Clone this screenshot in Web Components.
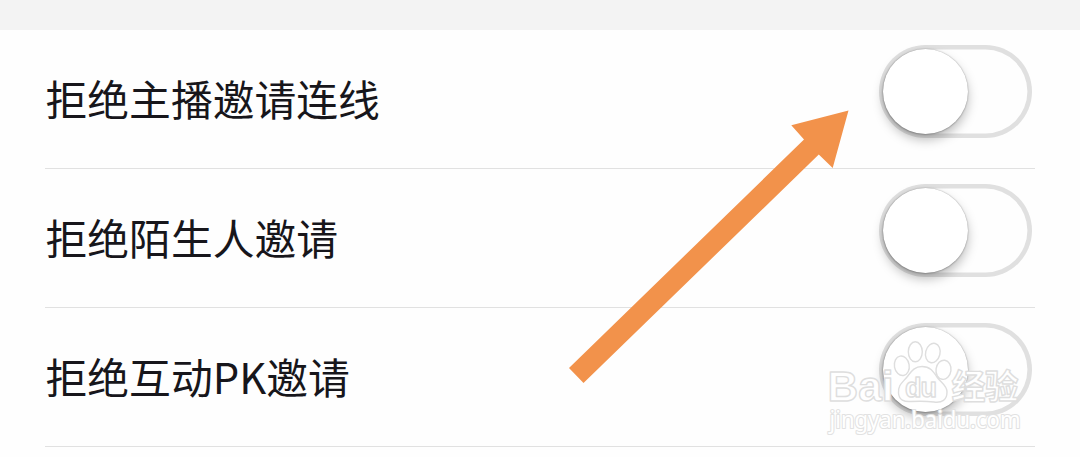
<!DOCTYPE html>
<html lang="zh-CN">
<head>
<meta charset="UTF-8">
<title>邀请设置</title>
<style>
  body {
    margin: 0;
    background: #fefefe;
    color: #17161b;
    font-family: 'Noto Sans CJK SC', sans-serif;
    overflow: hidden;
  }
</style>
</head>
<body>
<settings-page>
  <setting-row>拒绝主播邀请连线</setting-row>
  <setting-row>拒绝陌生人邀请</setting-row>
  <setting-row>拒绝互动PK邀请</setting-row>
  <pointer-arrow slot="overlay"></pointer-arrow>
  <water-mark slot="overlay"></water-mark>
</settings-page>

<script>
//page: grey strip on top, then the list of rows
const pageTemplate = document.createElement('template');
pageTemplate.innerHTML = `
<style>
  :host {
    display: flex;
    flex-direction: column;
    position: relative;
    height: 457px;
    overflow: hidden;
  }
  .strip {
    flex: none;
    height: 30px;
    background: #f3f3f3;
  }
  .list {
    display: flex;
    flex-direction: column;
    padding: 0 45px;
  }
</style>
<div class="strip"></div>
<div class="list"><slot></slot></div>
<slot name="overlay"></slot>`;

class SettingsPage extends HTMLElement {
  constructor() {
    super();
    this.attachShadow({ mode: 'open' });
    this.shadowRoot.appendChild(pageTemplate.content.cloneNode(true));
  }
}

//on/off switch
const switchTemplate = document.createElement('template');
switchTemplate.innerHTML = `
<style>
  :host {
    display: block;
    flex: none;
    box-sizing: border-box;
    width: 153px;
    height: 93px;
    padding: 4px;
    border-radius: 47px;
    box-shadow: inset 0 0 0 4.6px #e0e0e0;
    cursor: pointer;
  }
  .knob {
    width: 85px;
    height: 85px;
    border-radius: 50%;
    background: #fff;
    box-shadow: 0 0 1.5px rgba(0, 0, 0, .36), -.5px 1px 2px rgba(0, 0, 0, .16), 0 6px 11px rgba(0, 0, 0, .26);
  }
  :host([checked]) { background: #4cd964; box-shadow: none; }
  :host([checked]) .knob { margin-left: 60px; }
</style>
<div class="knob"></div>`;

class ToggleSwitch extends HTMLElement {
  constructor() {
    super();
    this.attachShadow({ mode: 'open' });
    this.shadowRoot.appendChild(switchTemplate.content.cloneNode(true));
    this.addEventListener('click', () => this.toggleAttribute('checked'));
  }
}

//label on the left, switch on the right
const rowTemplate = document.createElement('template');
rowTemplate.innerHTML = `
<style>
  :host {
    display: flex;
    justify-content: space-between;
    align-items: flex-start;
    box-sizing: border-box;
    height: 139px;
    padding: 15px 3px 0 0;
    border-bottom: 1px solid #e1e1e1;
  }
  .label {
    padding: 23px 0 0 .5px;
    font-size: 41.8px;
    line-height: 60px;
    white-space: nowrap;
  }
</style>
<div class="label"><slot></slot></div>
<toggle-switch></toggle-switch>`;

class SettingRow extends HTMLElement {
  constructor() {
    super();
    this.attachShadow({ mode: 'open' });
    this.shadowRoot.appendChild(rowTemplate.content.cloneNode(true));
  }
}

//orange arrow over the list
const arrowTemplate = document.createElement('template');
arrowTemplate.innerHTML = `
<style>
  :host {
    position: absolute;
    left: 569px;
    top: 110px;
    pointer-events: none;
  }
  svg { display: block; }
</style>
<svg width="280" height="274" viewBox="0 0 280 274">
  <path d="M279.5 .5 L222.3 15.3 L235 29.5 L0 258 L14.5 273 L249.8 44.5 L263.7 58 Z" fill="#f2924b"/>
</svg>`;

class PointerArrow extends HTMLElement {
  constructor() {
    super();
    this.attachShadow({ mode: 'open' });
    this.shadowRoot.appendChild(arrowTemplate.content.cloneNode(true));
  }
}

//site logo with the paw, white with a thin grey edge
const markTemplate = document.createElement('template');
markTemplate.innerHTML = `
<style>
  :host {
    position: absolute;
    left: 820px;
    top: 334px;
    pointer-events: none;
  }
  svg { display: block; }
  text {
    fill: #fff;
    stroke: #dedede;
    stroke-width: 1.4px;
    stroke-linejoin: round;
    font-family: 'Liberation Sans', sans-serif;
  }
  .bold { font-weight: bold; }
  .cjk { font-family: 'Noto Sans CJK SC', sans-serif; font-weight: 700; }
  .url {
    font-family: 'Noto Sans', sans-serif;
    stroke: #e2e2e2;
    stroke-width: 2.2px;
    paint-order: stroke;
  }
  .paw { fill: #fff; fill-opacity: .8; stroke: #dedede; stroke-width: 1.4px; }
</style>
<svg width="210" height="105" viewBox="0 0 210 105">
  <g class="paw">
    <ellipse cx="81.8" cy="31.8" rx="7.4" ry="9.8" transform="rotate(-10 81.8 31.8)"/>
    <ellipse cx="95.3" cy="17.8" rx="7" ry="10"/>
    <ellipse cx="112.8" cy="19" rx="7.2" ry="9.8" transform="rotate(14 112.8 19)"/>
    <ellipse cx="123.5" cy="35.8" rx="7.5" ry="9.6" transform="rotate(8 123.5 35.8)"/>
    <path d="M102 32.5 C94 32.5 91 38 87 43 C82 49 78 51 78.5 59 C79 66 84 68 91 67.5 C99 67 106 67 114 68 C122 69 127 66 127 58 C127 51 121 49 117 43 C113 37 110 32.5 102 32.5 Z"/>
  </g>
  <text class="bold" x="7.5" y="67" font-size="43" textLength="66" lengthAdjust="spacingAndGlyphs">Bai</text>
  <text class="bold" x="85" y="62.5" font-size="27" textLength="32">du</text>
  <text class="cjk" x="131.5" y="64.5" font-size="34" textLength="67">经验</text>
  <text class="url" x="9.5" y="93.5" font-size="23" textLength="191" lengthAdjust="spacingAndGlyphs">jingyan.baidu.com</text>
</svg>`;

class WaterMark extends HTMLElement {
  constructor() {
    super();
    this.attachShadow({ mode: 'open' });
    this.shadowRoot.appendChild(markTemplate.content.cloneNode(true));
  }
}

//define custom elements
window.customElements.define('toggle-switch', ToggleSwitch);
window.customElements.define('setting-row', SettingRow);
window.customElements.define('pointer-arrow', PointerArrow);
window.customElements.define('water-mark', WaterMark);
window.customElements.define('settings-page', SettingsPage);
</script>
</body>
</html>
